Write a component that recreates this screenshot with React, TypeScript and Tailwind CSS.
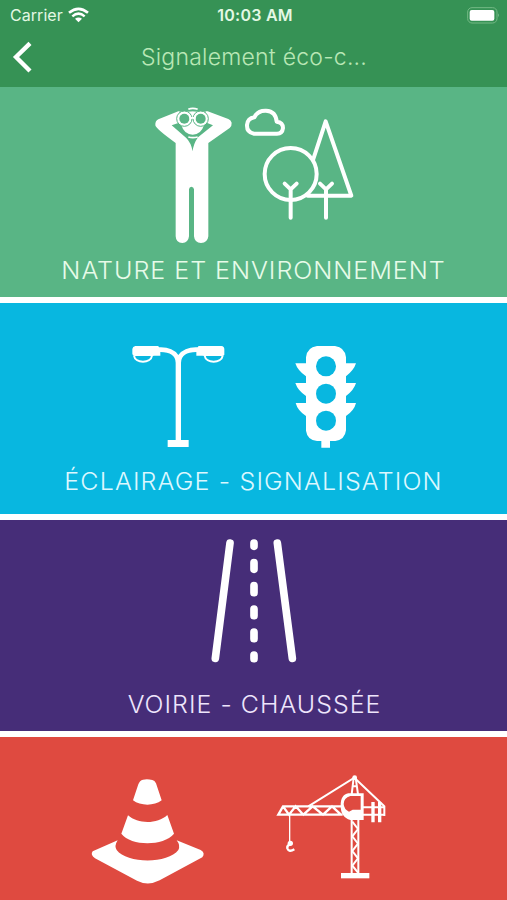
import type { ReactNode } from 'react';

function StatusBar() {
  return (
    <div className="flex h-[30px] items-center pl-[10px] pr-[7px] text-[#e4f8e4]">
      <div className="flex flex-1 items-center gap-[5px]">
        <span className="text-[16px] leading-[30px] tracking-[0.05px]">Carrier</span>
        <svg className="h-[16px] w-[21px]" viewBox="0 0 63 48" fill="none" stroke="#fff">
          <path d="M3 17.500Q31.500 -6 60 17.500" strokeWidth="8" />
          <path d="M13 28Q31.500 12 50 28" strokeWidth="7.500" />
          <path d="M21 35.500Q31.500 27 42 35.500L31.500 46Z" fill="#fff" stroke="none" />
        </svg>
      </div>
      <span className="text-[16px] font-semibold leading-[30px] tracking-[0.25px]">10:03 AM</span>
      <div className="flex flex-1 justify-end">
        <svg className="h-[18px] w-[33px]" viewBox="0 0 99 54" fill="none">
          <rect x="2" y="5" width="88" height="46" rx="13" stroke="#74b985" strokeWidth="3" />
          <rect x="8" y="12" width="74" height="32" rx="6" fill="#fff" />
          <path d="M94 22Q99 28 94 34Z" fill="#8fca9d" />
        </svg>
      </div>
    </div>
  );
}

function Header() {
  return (
    <header className="h-[87px] bg-[#369255]">
      <StatusBar />
      <div className="flex h-[54px] items-center">
        <svg className="ml-[10px] h-[36px] w-[26px]" viewBox="0 0 78 108" fill="none">
          <path d="M60 13L18 54L60 96" stroke="#fff" strokeWidth="13" />
        </svg>
        <h1 className="ml-[105px] whitespace-nowrap text-[23px] font-light leading-[54px] tracking-[0.23px] text-[#b9e7b5]">
          Signalement éco-c...
        </h1>
      </div>
    </header>
  );
}

function Explorer() {
  return (
    <svg className="h-[155px] w-[95px]" viewBox="0 0 285 465" fill="#fff">
      <path d="M100 49L40 73Q30 78 31 91Q32 101 92 144V424Q93 444 112 444Q130 443 132 424V283Q133 275 139 275Q146 275 147 283V424Q149 444 168 444Q188 443 190 424V144L254 99Q261 92 260 83Q258 76 250 72L188 49Z" />
      <path d="M80 91L100 84L119 97L143 104L166 97L185 83L204 91L159 127Q145 147 143 169Q138 142 123 128Z" fill="#59b585" />
      <path d="M109 91Q118 119 143 119Q168 119 177 91L153 80H131Z" />
      <path d="M130 43Q143 37 158 43M130 126Q143 130 158 126" fill="none" stroke="#fff" strokeWidth="5" />
      <path d="M103 51Q142 43 183 51" fill="none" stroke="#59b585" strokeWidth="3" />
      <circle cx="118" cy="71" r="23" stroke="#59b585" strokeWidth="3" />
      <circle cx="167" cy="71" r="23" stroke="#59b585" strokeWidth="3" />
      <circle cx="118" cy="71" r="15" fill="#59b585" />
      <circle cx="167" cy="71" r="15" fill="#59b585" />
      <path d="M134 71Q142 66 151 71" fill="none" stroke="#fff" strokeWidth="6" />
    </svg>
  );
}

function Trees() {
  return (
    <svg className="mt-[5px] h-[125px] w-[120px]" viewBox="0 0 360 375" fill="none" stroke="#fff" strokeWidth="12" strokeLinecap="round" strokeLinejoin="round">
      <path d="M42 101Q20 97 21 75Q23 55 43 52Q53 31 78 32Q108 34 110 65Q129 67 129 84Q127 101 111 101Z" />
      <circle cx="152" cy="222" r="78" />
      <path d="M219 180L257 64L334 287H203" />
      <path d="M152 353V268M134 251L152 268L170 251M258 353V268M240 251L258 268L276 251" />
    </svg>
  );
}

function StreetLamp() {
  return (
    <svg className="h-[120px] w-[110px]" viewBox="0 0 330 360" fill="#fff">
      <path d="M31 33H98Q101 33 102 37Q142 35 160 60Q179 35 218 37Q219 33 223 33H289Q298 34 298 43V59Q296 63 290 63H238L232 62H214V51Q169 51 168 83V315H191V336H128V315H152V83Q151 51 106 51V62H88L82 63H29Q22 62 22 56V42Q23 34 31 33Z" />
      <path d="M27 62C30 86 78 86 81 62M239 62C242 86 290 86 293 62" fill="none" stroke="#fff" strokeWidth="6" />
    </svg>
  );
}

function TrafficLight() {
  return (
    <svg className="h-[120px] w-[80px]" viewBox="0 0 240 360" fill="#fff">
      <path d="M96 33H150Q180 37 183 67V85H213Q207 105 183 124V144H213Q207 165 183 183V204H213Q208 226 183 243V286Q180 314 151 318H135V338H109V318H96Q67 315 63 287V243Q38 227 32 204H63V183Q38 166 31 144H63V124Q38 107 31 85H63V67Q66 37 96 33Z" />
      <circle cx="123" cy="94" r="30" fill="#08b7e0" />
      <circle cx="123" cy="176" r="30" fill="#08b7e0" />
      <circle cx="123" cy="257" r="30" fill="#08b7e0" />
    </svg>
  );
}

function Road() {
  return (
    <svg className="h-[140px] w-[110px]" viewBox="0 0 330 420" fill="none" stroke="#fff" strokeWidth="23" strokeLinecap="round">
      <path d="M90 39L46 385M232 39L277 385" />
      <path d="M162 39V49M162 98V118M162 167V188M162 237V257M162 306V326M162 375V386" />
    </svg>
  );
}

function Cone() {
  return (
    <svg className="mt-[5px] h-[125px] w-[135px]" viewBox="0 0 405 375" fill="#fff">
      <path d="M189 29Q202 26 217 30Q224 31 228 40L245 91C222 109 181 108 159 91L175 43Q179 31 189 29Z" />
      <path d="M144 136C174 163 232 163 262 135L282 191C250 229 154 229 124 191Z" />
      <path d="M113 211Q102 228 110 240C140 281 264 282 295 240Q302 226 290 211L362 240Q377 249 367 262L239 331Q204 349 171 332L45 265Q30 254 38 244Z" />
    </svg>
  );
}

function Crane() {
  return (
    <svg className="h-[125px] w-[125px]" viewBox="0 0 375 375" fill="none" stroke="#fff" strokeWidth="6">
      <path d="M218 124H39L25 149H218M39 124L57 149L77 124L100 149L128 124L159 149L186 124L213 149" strokeWidth="7" />
      <path d="M115 124L253 38L343 124" />
      <path d="M245 88L251 38H257L264 88M247 64H261" />
      <circle cx="254" cy="38" r="7" fill="#fff" stroke="none" />
      <path d="M235 85H281V165H241C222 158 212 146 212 122C212 99 220 88 235 85ZM241 93Q221 99 221 117Q222 133 237 140L248 134H272V93Z" fill="#fff" fillRule="evenodd" stroke="none" />
      <path d="M279 127H343V149H279M343 122V153" />
      <path d="M309 111V172M329 111V172" strokeWidth="10" />
      <path d="M245 164V325M265 164V325" />
      <path d="M247 170L264 192L247 214L264 236L247 258L264 280L247 302L264 323" strokeWidth="6" />
      <rect x="213" y="324" width="85" height="16" fill="#fff" stroke="none" />
      <path d="M59 149V231" strokeWidth="4" />
      <circle cx="61" cy="235" r="8" fill="#fff" stroke="none" />
      <path d="M61 238Q50 241 52 250Q57 263 73 253" strokeWidth="7" />
    </svg>
  );
}

function Label({ children, className }: { children: ReactNode; className: string }) {
  return (
    <h2 className={`whitespace-nowrap text-center text-[24px] font-light leading-[30px] ${className}`}>
      {children}
    </h2>
  );
}

export default function App() {
  return (
    <main className="flex h-[900px] w-[507px] flex-col overflow-hidden bg-white font-['Inter','Liberation_Sans',sans-serif]">
      <Header />
      <section className="h-[210px] shrink-0 bg-[#59b585] pt-[8px]">
        <div className="flex h-[161px] pl-[145px]">
          <Explorer />
          <Trees />
        </div>
        <Label className="scale-x-[1.047] tracking-[0.9px] text-[#e7fbe9]">NATURE ET ENVIRONNEMENT</Label>
      </section>
      <section className="mt-[6px] h-[211px] shrink-0 bg-[#08b7e0] pt-[32px]">
        <div className="flex h-[132px] gap-[50px] pl-[125px]">
          <StreetLamp />
          <TrafficLight />
        </div>
        <Label className="scale-x-[1.042] tracking-[1.1px] text-[#dcf7ff]">ÉCLAIRAGE - SIGNALISATION</Label>
      </section>
      <section className="mt-[6px] h-[211px] shrink-0 bg-[#462d78] pt-[10px]">
        <div className="flex h-[160px] pl-[200px]">
          <Road />
        </div>
        <Label className="scale-x-[1.038] pl-[2px] tracking-[1px] text-[#eee5fc]">VOIRIE - CHAUSSÉE</Label>
      </section>
      <section className="mt-[6px] flex h-[163px] shrink-0 gap-[55px] bg-[#df4a40] pl-[80px] pt-[28px]">
        <Cone />
        <Crane />
      </section>
    </main>
  );
}
